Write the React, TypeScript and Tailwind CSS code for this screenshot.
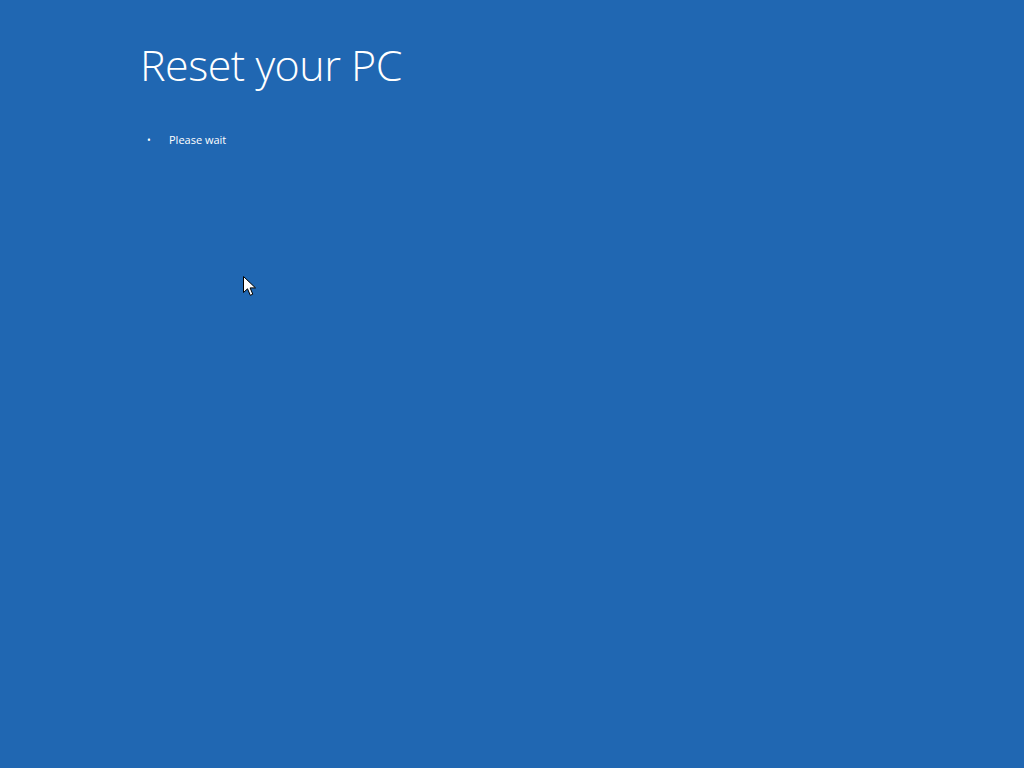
export default function App() {
  return (
    <div className="relative w-[1024px] h-[768px] overflow-hidden bg-[#2067b2] text-white font-['Open_Sans','Liberation_Sans',sans-serif]">
      <div className="pl-[140px] pt-[35px]">
        <h1 className="text-[43px] font-light leading-[60px] tracking-[-0.5px]">Reset your PC</h1>
        <ul className="mt-[35px] flex flex-col">
          <li className="flex items-center h-[20px] text-[11px]">
            <span className="w-[29px] pl-[7px] text-[10px] leading-none">•</span>
            <span>Please wait</span>
          </li>
        </ul>
      </div>
      <svg
        className="absolute left-[243px] top-[276px]"
        width="14"
        height="21"
        viewBox="0 0 14 21"
      >
        <path
          d="M0.5 0.5 L0.5 16.5 L4.5 12.8 L7.3 19.3 L9.8 18.2 L7.1 11.9 L12.5 11.9 Z"
          fill="white"
          stroke="black"
          strokeWidth="1"
          strokeLinejoin="round"
        />
      </svg>
    </div>
  );
}
